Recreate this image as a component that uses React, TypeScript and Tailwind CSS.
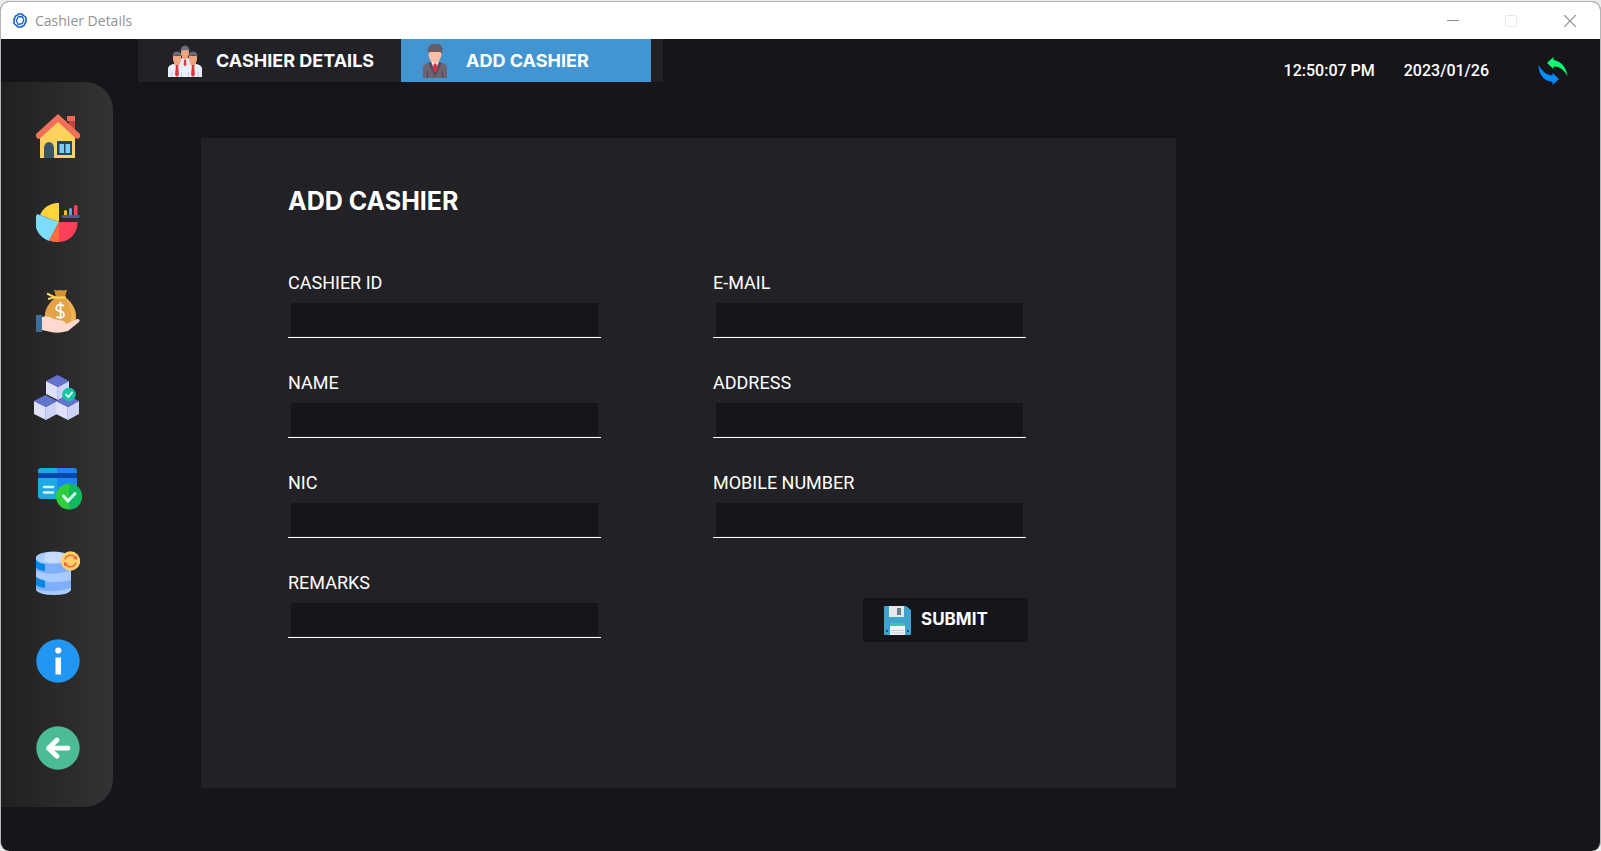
import React from "react";

const rubik = "font-['Inter','Roboto',sans-serif]";

function AppLogo() {
  return (
    <svg width="14" height="15" viewBox="0 0 14 15" fill="none" stroke="#1560d0" strokeWidth="1.6" aria-hidden="true">
      <path d="M4.500 1H9L10.500 3M10 2 13 4.500V9.500M13 8 11 12.500 8.500 13.500M9.500 14H5L3.500 12M4 13 1 10.500V5.500M1 7 2.500 3 5.500 1.500" />
      <path d="M5 4 9 3.500 10.800 6.500 9.500 10.500 5.500 11.500 3.300 8Z" strokeWidth="1.300" />
    </svg>
  );
}

function HomeIcon() {
  return (
    <svg width="44" height="44" viewBox="0 0 44 44" aria-hidden="true">
      <path d="M33 5h6v18l-6-6z" fill="#c8443a" />
      <path d="M31 2h8v5h-8z" fill="#ee6a5c" />
      <path d="M4 22 22 6 39 22V44H4z" fill="#ffd25f" />
      <path d="M22 0 0 20v3q2 3 4 1.500L22 8 40 24.500q3 1 4-1.500v-3z" fill="#f0705a" />
      <path d="M8 44V34a5 6 0 0 1 10 0V44z" fill="#3a5567" />
      <path d="M21 27h15v14H21z" fill="#27455b" />
      <path d="M23.500 30H28v9h-4.500zM29.500 30H34v9h-4.500z" fill="#78cef7" />
    </svg>
  );
}

function ReportIcon() {
  return (
    <svg width="44" height="40" viewBox="0 0 44 40" aria-hidden="true">
      <path d="M23 19V0A19 19 0 0 0 4 12z" fill="#ffd43a" />
      <path d="M23 19 1 11A20 20 0 0 0 13 38z" fill="#7cdcfa" />
      <path d="M23 19 13 37.500A20 20 0 0 0 23 39z" fill="#ff6d3d" />
      <path d="M23 19H41.500A19 19 0 0 1 23 39z" fill="#ff4058" />
      <path d="M28 8q1.500-2 3 0v4h-3z" fill="#ffbb2e" />
      <path d="M33 6q1.500-2 3 0v6h-3z" fill="#64a0ff" />
      <path d="M38 3q1.500-2 3.500 0v9H38z" fill="#ff4058" />
      <path d="M27 12h16q1.500 1.500 0 3H27q-3-1.500 0-3z" fill="#565b83" />
    </svg>
  );
}

function SalaryIcon() {
  return (
    <svg width="44" height="44" viewBox="0 0 44 44" aria-hidden="true">
      <path d="M18 .5q3 1.500 6 .5 3 1 7-.5L29 8H20z" fill="#d19335" />
      <path d="M20 8h9c8 6 12 14 11 22q-2 7-15 7T9 29C8 20 13 14 20 8z" fill="#e3a448" />
      <path d="M29 9c8 6 11 14 10 21q-1 5-6 6c4-8 3-18-4-27z" fill="#f0b552" />
      <path d="M11 4.500l8 4h11M12 10l8-2" fill="none" stroke="#ffd45f" strokeWidth="2" />
      <path d="M28 17q-6-3-7.500 1t4 4q5 2 3 5.500-3 3-7 0M24.500 13v16" fill="none" stroke="#fff" strokeWidth="1.700" />
      <path d="M6 28q6-2 12 2l10 2 2 3 11-5q4 0 2 3L32 42q-10 3-17 1l-9-2z" fill="#ffd9cf" />
      <path d="M0 26h6v17H0z" fill="#3d6f96" />
    </svg>
  );
}

function StockIcon() {
  return (
    <svg width="48" height="46" viewBox="0 0 48 46" aria-hidden="true">
      {[[12, 0], [0, 20], [22, 20]].map(([x, y]) => (
        <g key={x} transform={`translate(${x} ${y})`}>
          <path d="M0 6 12 12V25L0 19z" fill="#dfe1fb" />
          <path d="M23 6 12 12V25l11-6z" fill="#cdd2f7" />
          <path d="M11.500 0 23 6 12 12 0 6z" fill="#6373cf" />
          <path d="M11.500 12v13" stroke="#b5bdf2" strokeWidth="1" />
        </g>
      ))}
      <circle cx="35" cy="19.500" r="6.800" fill="#16c4a2" />
      <path d="m31.500 19 2.800 3 4.200-5" fill="none" stroke="#fff" strokeWidth="1.700" />
    </svg>
  );
}

function PaymentIcon() {
  return (
    <svg width="48" height="48" viewBox="-4 -6 48 48" aria-hidden="true">
      <path d="M3 0H20V31H3q-3 0-3-3V3Q0 0 3 0z" fill="#1ca9e6" />
      <path d="M19 0H36q3 0 3 3V31H19z" fill="#1b86fa" />
      <path d="M0 5h39v5H0z" fill="#0548a5" />
      <path d="M6 19h9M6 24.500h9" stroke="#d9f5ff" strokeWidth="2.600" strokeLinecap="round" />
      <circle cx="31" cy="28.500" r="13" fill="#2ece3e" />
      <path d="M31 15.500a13 13 0 0 1 0 26z" fill="#10b95f" />
      <path d="m25.500 28 4.500 5 7-7.500" fill="none" stroke="#d8fff5" strokeWidth="3" strokeLinecap="round" />
    </svg>
  );
}

function BackupIcon() {
  return (
    <svg width="44" height="44" viewBox="0 0 44 44" aria-hidden="true">
      <path d="M0 6h35v33q-2 5-17 5T0 39z" fill="#a9cbff" />
      <path d="M0 10q8 5 35 1v8q-18 7-35 1zM0 28q15 6 35 1v8q-18 6-35 1z" fill="#7faffa" />
      <path d="M0 9q4 4 9 4v7q-5 0-9-3zM0 26q4 3 9 3.500V37q-5 0-9-3z" fill="#0686e4" />
      <ellipse cx="17.500" cy="6.500" rx="17.500" ry="6" fill="#a9cbff" />
      <path d="M9 3Q16-1 28 3v7q-10 4-20 0z" fill="#c7dcff" />
      <circle cx="34.500" cy="10" r="9.700" fill="#ffd168" />
      <path d="M29 8.500A5.800 5.800 0 0 1 39.500 7M40 11.500A5.800 5.800 0 0 1 29.500 13" fill="none" stroke="#f26749" strokeWidth="1.500" />
      <path d="M41 4.500V9l-4-1.500zM28 15.500V11l4 1.500z" fill="#f26749" />
    </svg>
  );
}

function InfoIcon() {
  return (
    <svg width="44" height="44" viewBox="0 0 44 44" aria-hidden="true">
      <circle cx="22" cy="22" r="21.700" fill="#2196f3" />
      <circle cx="22.300" cy="11.500" r="3.100" fill="#fff" />
      <path d="M19.500 18.500H25V35.500H19.500z" fill="#fff" />
    </svg>
  );
}

function BackIcon() {
  return (
    <svg width="44" height="44" viewBox="0 0 44 44" aria-hidden="true">
      <circle cx="22" cy="22" r="21.700" fill="#4bbc94" />
      <path d="M21 14 12.500 22.200l8.500 8M13 22.200H32" fill="none" stroke="#fff" strokeWidth="4.800" strokeLinecap="round" strokeLinejoin="round" />
    </svg>
  );
}

function TeamIcon() {
  return (
    <svg width="34" height="32" viewBox="0 0 34 32" aria-hidden="true">
      <path d="M10 32V16q2-3 7-4 6 1 8 4v16z" fill="#dfe7f6" />
      <path d="m16 15 2 0 .6 6h-3z" fill="#d83a46" />
      <path d="M13 5h8v4q-1 5-4 6-3-1-4-6z" fill="#f2a57c" />
      <path d="M12.500 6q0-5 4.500-5.500 4.500.5 4.500 5.500-4-2-9 0z" fill="#696d7c" />
      {[0, 16].map((x) => (
        <g key={x} transform={`translate(${x} 0)`}>
          <path d="M0 32V23q1-3 5-4h8q4 1 5 4v9z" fill="#e8edf9" />
          <path d="m6 19 3 4 3-4v-4H6z" fill="#f2a57c" />
          <path d="m8 20h2l1 10-2 2-2-2z" fill="#dd3643" />
          <path d="M5 11h8v4q-1 4-4 5-3-1-4-5z" fill="#f2a57c" />
          <path d="M4.500 11.500Q5 6.500 9 6.500t4.500 5q-4-2-9 0z" fill="#696d7c" />
        </g>
      ))}
      <path d="M4 27v5M13.500 27v5M20.500 27v5M30 27v5" stroke="#bcc9e4" strokeWidth="1" />
    </svg>
  );
}

function PersonIcon() {
  return (
    <svg width="24" height="34" viewBox="0 0 24 34" aria-hidden="true">
      <path d="M0 34V23q1-3 7-5h10q6 2 7 5v11z" fill="#6d6372" />
      <path d="m8 17 4 10 4-10v-2H8z" fill="#fff" />
      <path d="m7.500 18 4.500 11 4.500-11 2 1.500L12 33 5.500 19.500z" fill="#564d5c" />
      <path d="m10.800 19.500h2.600l1 6-2.200 3-2.400-3z" fill="#d72f42" />
      <path d="M5.500 7h13v4q-2 7-5 8h-3q-4-2-5-8z" fill="#ffbfa4" />
      <path d="M5.500 10Q3 2 9 0h7q5 2 3 10-1-2-2-2H7q-1 0-1.500 2z" fill="#665d68" />
      <path d="M4.500 27v7M19.500 27v7" stroke="#514857" />
    </svg>
  );
}

function RefreshIcon() {
  return (
    <svg width="30" height="28" viewBox="0 0 30 28" aria-hidden="true">
      <path d="M9 6 15.500 0v3Q27 5 29.500 19 24 9 15.500 9.500V12z" fill="#0bff6e" />
      <path d="M21 22 14.500 28v-3Q1 23 .5 8 6 18 14.500 18.500V16z" fill="#078bff" />
    </svg>
  );
}

function SaveIcon() {
  return (
    <svg width="27" height="29" viewBox="0 0 27 29" aria-hidden="true">
      <path d="M0 1q0-1 1-1h21l5 4v24q0 1-1 1H1q-1 0-1-1z" fill="#3fa4cd" />
      <path d="M5 0h15v11H5z" fill="#e3e8ed" />
      <path d="M13 2h4v7h-4z" fill="#6b7b8b" />
      <path d="M6 17h15v3H6z" fill="#4bbfa8" />
      <path d="M6 20h15v9H6z" fill="#f1f4f6" />
      <path d="M7 24.500h13M7 27h13" stroke="#c5ccd2" />
      <path d="M2 24h2v2H2zM23 24h2v2h-2z" fill="#174d7b" />
    </svg>
  );
}

const sideItems = [
  { label: "Home", icon: <HomeIcon /> },
  { label: "Reports", icon: <ReportIcon /> },
  { label: "Salaries", icon: <SalaryIcon /> },
  { label: "Stock", icon: <StockIcon /> },
  { label: "Payments", icon: <PaymentIcon /> },
  { label: "Backup", icon: <BackupIcon /> },
  { label: "Information", icon: <InfoIcon /> },
  { label: "Back", icon: <BackIcon /> },
];

function Field({ id, label }: { id: string; label: string }) {
  return (
    <div className="h-[100px] w-full max-w-[313px]">
      <label htmlFor={id} className="block h-[31px] text-[18px] leading-[22px]">
        {label}
      </label>
      <div className="border-b border-white px-[3px] pb-px">
        <input id={id} type="text" className="block h-[33px] w-full bg-[#16151a] px-2 text-[18px] text-white outline-none" />
      </div>
    </div>
  );
}

export default function App() {
  return (
    <div className="min-h-screen bg-[#ececec] pt-px font-['Roboto',sans-serif] text-white">
      <div className="flex min-h-[calc(100vh-1px)] flex-col overflow-hidden rounded-[9px] border border-b-0 border-[#b5b5b5] bg-[#16151a]">
        <header className="flex h-[37px] items-center justify-between bg-white pl-3">
          <div className="flex items-center gap-2">
            <AppLogo />
            <span className="font-['Open_Sans','Noto_Sans',sans-serif] text-[14px] text-[#929292]">Cashier Details</span>
          </div>
          <div className="flex items-center text-[#8c8c8c]">
            <button type="button" aria-label="Minimize" className="flex w-[58px] justify-center">
              <svg width="12" height="12" viewBox="0 0 12 12" stroke="currentColor"><path d="M0 5.500h12" /></svg>
            </button>
            <button type="button" aria-label="Maximize" disabled className="flex w-[58px] justify-center text-[#e9e9e9]">
              <svg width="12" height="12" viewBox="0 0 12 12" fill="none" stroke="currentColor"><rect x=".5" y=".5" width="11" height="11" rx="1" /></svg>
            </button>
            <button type="button" aria-label="Close" className="flex w-[60px] justify-center">
              <svg width="12" height="12" viewBox="0 0 12 12" stroke="currentColor" strokeWidth="1.200"><path d="m0 0 12 12M12 0 0 12" /></svg>
            </button>
          </div>
        </header>

        <div className="flex flex-1">
          <nav aria-label="Main" className="mt-[43px] flex h-[725px] w-28 shrink-0 flex-col rounded-r-[28px] bg-linear-to-r from-[#202020] to-[#333333] pt-[10px] pb-[15px] pl-[2px]">
            {sideItems.map((item) => (
              <button key={item.label} type="button" aria-label={item.label} className="flex w-full flex-1 items-center justify-center">
                {item.icon}
              </button>
            ))}
          </nav>

          <div className="flex flex-1 flex-col">
            <div className="flex items-start justify-between pr-8">
              <div className={`ml-[25px] flex h-[43px] bg-[#222126] pr-3 text-[18px] font-bold ${rubik}`}>
                <button type="button" className="flex w-[263px] items-center gap-[14px] pl-[30px]">
                  <TeamIcon />
                  CASHIER DETAILS
                </button>
                <button type="button" className="flex w-[250px] items-center gap-[19px] bg-[#4295d1] pl-[22px]">
                  <PersonIcon />
                  ADD CASHIER
                </button>
              </div>
              <div className="flex h-16 items-center text-[16px] font-medium">
                <span className="mr-[29px]">12:50:07 PM</span>
                <span className="mr-[49px]">2023/01/26</span>
                <button type="button" aria-label="Refresh"><RefreshIcon /></button>
              </div>
            </div>

            <main className="mt-[35px] mr-[424px] ml-[88px] min-h-[650px] bg-[#222126] pl-[87px]">
              <h1 className={`pt-[47px] text-[25px] leading-8 font-bold ${rubik}`}>ADD CASHIER</h1>
              <form className="mt-[55px] grid grid-cols-[minmax(0,313px)_minmax(0,315px)] gap-x-28" onSubmit={(e) => e.preventDefault()}>
                <Field id="cashier-id" label="CASHIER ID" />
                <Field id="email" label="E-MAIL" />
                <Field id="name" label="NAME" />
                <Field id="address" label="ADDRESS" />
                <Field id="nic" label="NIC" />
                <Field id="mobile" label="MOBILE NUMBER" />
                <Field id="remarks" label="REMARKS" />
                <button type="submit" className={`mt-[26px] flex h-11 w-[165px] items-center gap-[10px] justify-self-end bg-[#16151a] pl-[21px] text-[17px] font-bold ${rubik}`}>
                  <SaveIcon />
                  SUBMIT
                </button>
              </form>
            </main>
          </div>
        </div>
      </div>
    </div>
  );
}
